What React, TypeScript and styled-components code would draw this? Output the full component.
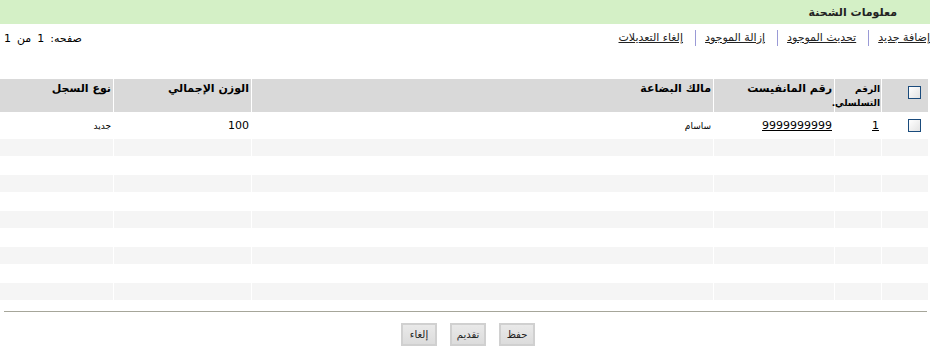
import React from "react";
import styled, { createGlobalStyle } from "styled-components";

const GlobalStyle = createGlobalStyle`
  html, body {
    margin: 0;
    padding: 0;
    background: #ffffff;
    font-family: Tahoma, "DejaVu Sans", sans-serif;
    font-size: 11px;
    color: #000;
  }
`;

const Page = styled.div`
  direction: rtl;
  width: 930px;
`;

const TitleBar = styled.div`
  height: 24px;
  background: #d4f0c6;
  display: flex;
  align-items: center;
  padding-right: 33px;
  font-weight: bold;
  font-size: 11px;
  color: #222;
`;

const ToolRow = styled.div`
  display: flex;
  justify-content: space-between;
  align-items: center;
  height: 22px;
  margin-top: 3px;
  padding-left: 4px;
`;

const Links = styled.div`
  display: flex;
  align-items: center;
`;

const ActionLink = styled.a`
  color: #222;
  text-decoration: underline;
  font-size: 11px;
  line-height: 16px;
  cursor: pointer;
  padding: 0 0 0 9px;
  & + & {
    border-right: 1px solid #9a9ad6;
    padding-right: 12px;
  }
`;

const PageInfo = styled.div`
  font-size: 11px;
  display: flex;
  gap: 6px;
`;

const Grid = styled.table`
  margin: 29px 1px 0 0;
  width: 930px;
  border-collapse: separate;
  border-spacing: 1px;
  table-layout: fixed;
`;

const HeadCell = styled.th<{ $w?: number; $tight?: boolean }>`
  width: ${(p) => (p.$w ? `${p.$w}px` : "auto")};
  background: #d9d9d9;
  height: 33px;
  padding: ${(p) => (p.$tight ? "3px 1px 0 0" : "3px 2px 0 2px")};
  vertical-align: top;
  text-align: right;
  font-weight: bold;
  font-size: ${(p) => (p.$tight ? "9px" : "11px")};
  line-height: 14px;
  box-sizing: border-box;
`;

const Row = styled.tr<{ $alt: boolean }>`
  background: ${(p) => (p.$alt ? "#f5f5f5" : "#ffffff")};
`;

const Cell = styled.td<{ $h: number; $small?: boolean }>`
  height: ${(p) => p.$h}px;
  padding: 0 2px;
  text-align: right;
  vertical-align: middle;
  font-size: ${(p) => (p.$small ? "9px" : "11px")};
  box-sizing: border-box;
`;

const CheckCell = styled.td<{ $h: number }>`
  height: ${(p) => p.$h}px;
  text-align: right;
  vertical-align: middle;
  padding: 0 7px 0 0;
`;

const Box = styled.span`
  display: inline-block;
  width: 11px;
  height: 11px;
  border: 1px solid #1a4b7c;
  background: linear-gradient(135deg, #ffffff 0%, #e3e3e3 100%);
  vertical-align: middle;
`;

const Uline = styled.span`
  text-decoration: underline;
`;

const Rule = styled.hr`
  margin: 10px 3px 0 4px;
  border: 0;
  border-top: 1px solid #a6a69a;
  height: 0;
`;

const Buttons = styled.div`
  display: flex;
  justify-content: center;
  gap: 13px;
  margin-top: 11px;
  padding-left: 6px;
`;

const Button = styled.button`
  width: 36px;
  height: 23px;
  border: 2px solid #d0d0d0;
  background: linear-gradient(#e9e9e9, #dcdcdc);
  font-family: Tahoma, "DejaVu Sans", sans-serif;
  font-size: 10px;
  color: #222;
  padding: 0;
  cursor: pointer;
`;

const HeaderBox = styled.div`
  display: flex;
  justify-content: flex-start;
  padding: 4px 5px 0 0;
`;

const emptyRows = Array.from({ length: 9 }, (_, i) => i + 1);

const App = () => {
  return (
    <Page>
      <GlobalStyle />
      <TitleBar>معلومات الشحنة</TitleBar>
      <ToolRow>
        <Links>
          <ActionLink>إضافة جديد</ActionLink>
          <ActionLink>تحديث الموجود</ActionLink>
          <ActionLink>إزالة الموجود</ActionLink>
          <ActionLink>إلغاء التعديلات</ActionLink>
        </Links>
        <PageInfo>
          <span>صفحه:</span>
          <span>1</span>
          <span>من</span>
          <span>1</span>
        </PageInfo>
      </ToolRow>
      <Grid>
        <thead>
          <tr>
            <HeadCell $w={46}>
              <HeaderBox>
                <Box />
              </HeaderBox>
            </HeadCell>
            <HeadCell $w={46} $tight>
              الرقم التسلسلي.
            </HeadCell>
            <HeadCell $w={120}>رقم المانفيست</HeadCell>
            <HeadCell>مالك البضاعة</HeadCell>
            <HeadCell $w={137}>الوزن الإجمالي</HeadCell>
            <HeadCell $w={113}>نوع السجل</HeadCell>
          </tr>
        </thead>
        <tbody>
          <Row $alt={false}>
            <CheckCell $h={25}>
              <Box />
            </CheckCell>
            <Cell $h={25}>
              <Uline>1</Uline>
            </Cell>
            <Cell $h={25}>
              <Uline>9999999999</Uline>
            </Cell>
            <Cell $h={25} $small>
              ساسام
            </Cell>
            <Cell $h={25}>100</Cell>
            <Cell $h={25} $small>
              جديد
            </Cell>
          </Row>
          {emptyRows.map((i) => (
            <Row key={i} $alt={i % 2 === 1}>
              <CheckCell $h={17} />
              <Cell $h={17} />
              <Cell $h={17} />
              <Cell $h={17} />
              <Cell $h={17} />
              <Cell $h={17} />
            </Row>
          ))}
        </tbody>
      </Grid>
      <Rule />
      <Buttons>
        <Button>حفظ</Button>
        <Button>تقديم</Button>
        <Button>إلغاء</Button>
      </Buttons>
    </Page>
  );
};

export default App;
